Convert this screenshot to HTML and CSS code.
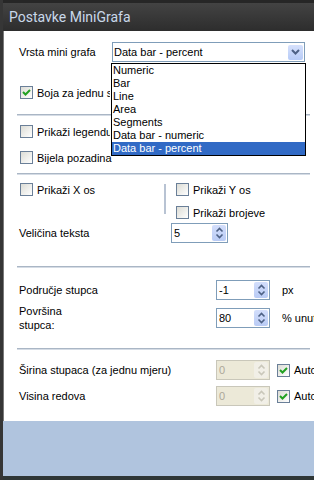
FILE: index.html
```html
<!DOCTYPE html>
<html lang="hr">
<head>
    <meta charset="UTF-8">
    <meta name="viewport" content="width=device-width, initial-scale=1.0">
    <title>Postavke MiniGrafa</title>
    <link rel="stylesheet" href="styles.css">
</head>
<body>
    <div class="window">
        <div class="title">Postavke MiniGrafa</div>
        <div class="content">
            <div class="row row-type">
                <span class="label w-type">Vrsta mini grafa</span>
                <div class="select">
                    <span class="select-value">Data bar - percent</span>
                    <span class="select-btn">
                        <svg width="9" height="6" viewBox="0 0 9 6"><path d="M1 1 L4.5 4.5 L8 1" fill="none" stroke="#4d6185" stroke-width="2"/></svg>
                    </span>
                    <ul class="dropdown">
                        <li>Numeric</li>
                        <li>Bar</li>
                        <li>Line</li>
                        <li>Area</li>
                        <li>Segments</li>
                        <li>Data bar - numeric</li>
                        <li class="selected">Data bar - percent</li>
                    </ul>
                </div>
            </div>

            <label class="check check-color"><span class="cb checked"></span><span class="hidden-by-list">Boja za jednu seriju</span></label>
            <div class="sep sep-1"></div>

            <label class="check check-legend"><span class="cb"></span><span class="hidden-by-list">Prikaži legendu</span></label>
            <label class="check check-white"><span class="cb"></span>Bijela pozadina</label>
            <div class="sep sep-2"></div>

            <div class="axes">
                <div class="axes-left">
                    <label class="check"><span class="cb"></span>Prikaži X os</label>
                </div>
                <div class="vsep"></div>
                <div class="axes-right">
                    <label class="check"><span class="cb"></span>Prikaži Y os</label>
                    <label class="check check-numbers"><span class="cb"></span>Prikaži brojeve</label>
                </div>
            </div>
            <div class="row row-size">
                <span class="label w-size">Veličina teksta</span>
                <div class="spin spin-wide">
                    <span class="spin-val">5</span>
                    <span class="spin-btn"><svg width="9" height="12" viewBox="0 0 9 12"><path d="M1.5 4.5 L4.5 1.5 L7.5 4.5 M1.5 7.5 L4.5 10.5 L7.5 7.5" fill="none" stroke="#4d6185" stroke-width="1.6"/></svg></span>
                </div>
            </div>
            <div class="sep sep-3"></div>

            <div class="row row-area">
                <span class="label w-wide">Područje stupca</span>
                <div class="spin">
                    <span class="spin-val">-1</span>
                    <span class="spin-btn"><svg width="9" height="12" viewBox="0 0 9 12"><path d="M1.5 4.5 L4.5 1.5 L7.5 4.5 M1.5 7.5 L4.5 10.5 L7.5 7.5" fill="none" stroke="#4d6185" stroke-width="1.6"/></svg></span>
                </div>
                <span class="unit">px</span>
            </div>
            <div class="row row-surface">
                <span class="label w-wide two-lines">Površina<br>stupca:</span>
                <div class="spin">
                    <span class="spin-val">80</span>
                    <span class="spin-btn"><svg width="9" height="12" viewBox="0 0 9 12"><path d="M1.5 4.5 L4.5 1.5 L7.5 4.5 M1.5 7.5 L4.5 10.5 L7.5 7.5" fill="none" stroke="#4d6185" stroke-width="1.6"/></svg></span>
                </div>
                <span class="unit">% unutar</span>
            </div>
            <div class="sep sep-4"></div>

            <div class="row row-width">
                <span class="label w-wide">Širina stupaca (za jednu mjeru)</span>
                <div class="spin disabled">
                    <span class="spin-val">0</span>
                    <span class="spin-btn"><svg width="9" height="12" viewBox="0 0 9 12"><path d="M1.5 4.5 L4.5 1.5 L7.5 4.5 M1.5 7.5 L4.5 10.5 L7.5 7.5" fill="none" stroke="#c9c7ba" stroke-width="1.6"/></svg></span>
                </div>
                <label class="check auto"><span class="cb checked"></span>Automatski</label>
            </div>
            <div class="row row-height">
                <span class="label w-wide">Visina redova</span>
                <div class="spin disabled">
                    <span class="spin-val">0</span>
                    <span class="spin-btn"><svg width="9" height="12" viewBox="0 0 9 12"><path d="M1.5 4.5 L4.5 1.5 L7.5 4.5 M1.5 7.5 L4.5 10.5 L7.5 7.5" fill="none" stroke="#c9c7ba" stroke-width="1.6"/></svg></span>
                </div>
                <label class="check auto"><span class="cb checked"></span>Automatski</label>
            </div>
        </div>
        <div class="footer"></div>
    </div>
</body>
</html>
```

FILE: styles.css
```css
body {
    margin: 0;
    font-family: 'Liberation Sans', Arial, sans-serif;
    font-size: 11px;
    color: #000;
    background-color: #2f3636;
}
.window {
    width: 314px;
    height: 480px;
    display: flex;
    flex-direction: column;
    overflow: hidden;
    border-left: 3px solid #363636;
    box-sizing: border-box;
}
.title {
    flex: none;
    height: 31px;
    box-sizing: border-box;
    border-top: 3px solid #262626;
    padding-left: 6px;
    line-height: 28px;
    font-family: Roboto, 'Liberation Sans', sans-serif;
    font-size: 14px;
    color: #c9d8ea;
    background: linear-gradient(#434343, #2d2d2d);
}
.content {
    flex: 1;
    background-color: #fff;
    box-shadow: inset 1px 0 0 #7a7a7a;
    padding: 11px 4px 0 16px;
    position: relative;
    white-space: nowrap;
}
.row {
    display: flex;
    align-items: center;
}
.label {
    flex: none;
}
.w-type { width: 93px; }
.w-size { width: 152px; }
.w-wide { width: 197px; }
.two-lines { line-height: 14px; }

/* combo box */
.select {
    position: relative;
    width: 193px;
    height: 20px;
    box-sizing: border-box;
    border: 1px solid #7f9db9;
    display: flex;
    align-items: center;
}
.select-value {
    flex: 1;
    padding-left: 1px;
}
.select-btn {
    width: 15px;
    height: 15px;
    margin-right: 1px;
    background: linear-gradient(#d6e1fc, #b7cbf7);
    border-radius: 2px;
    display: flex;
    align-items: center;
    justify-content: center;
}
.dropdown {
    position: absolute;
    top: 20px;
    left: -2px;
    width: 195px;
    box-sizing: border-box;
    margin: 0;
    padding: 0;
    list-style: none;
    border: 1px solid #000;
    background-color: #fff;
    z-index: 2;
}
.dropdown li {
    height: 13px;
    line-height: 13px;
    padding-left: 1px;
}
.dropdown li.selected {
    background-color: #316ac5;
    color: #fff;
}

/* checkboxes */
.check {
    display: flex;
    align-items: center;
    gap: 4px;
    height: 13px;
    margin-left: 1px;
}
.hidden-by-list {
    max-width: 73px;
    overflow: hidden;
}
.cb {
    flex: none;
    width: 13px;
    height: 13px;
    box-sizing: border-box;
    border: 1px solid #6a7f98;
    background: linear-gradient(135deg, #dcdcd5, #fff);
}
.cb.checked {
    background: url("data:image/svg+xml,%3Csvg xmlns='http://www.w3.org/2000/svg' width='11' height='11'%3E%3Cpath d='M2 5 L4.5 7.5 L9 3' fill='none' stroke='%2321a121' stroke-width='2'/%3E%3C/svg%3E") center no-repeat, linear-gradient(135deg, #dcdcd5, #fff);
}
.check-color { margin-top: 24px; }
.check-legend { margin-top: 9px; }
.check-white { margin-top: 13px; }

.sep {
    height: 1px;
    border-top: 1px solid #aab6c5;
    background-color: #d5dce5;
    margin-left: -2px;
}
.sep-1 { margin-top: 15px; }
.sep-2 { margin-top: 9px; }
.sep-3 { margin-top: 23px; }
.sep-4 { margin-top: 16px; }

/* axis options */
.axes {
    display: flex;
    margin-top: 8px;
}
.axes-left {
    width: 145px;
}
.vsep {
    width: 2px;
    height: 30px;
    margin-top: 1px;
    background-color: #b8c3d3;
}
.axes-right {
    padding-left: 9px;
}
.check-numbers { margin-top: 10px; }
.row-size { margin-top: 4px; }

/* spin boxes */
.spin {
    flex: none;
    width: 54px;
    height: 20px;
    box-sizing: border-box;
    border: 1px solid #7f9db9;
    background-color: #fff;
    display: flex;
    align-items: center;
}
.spin-wide { width: 57px; }
.spin-val {
    flex: 1;
    padding-left: 2px;
}
.spin-btn {
    width: 14px;
    height: 16px;
    margin-right: 1px;
    border-radius: 2px;
    background: linear-gradient(#d3defb, #b9cbf5);
    display: flex;
    align-items: center;
    justify-content: center;
}
.spin.disabled {
    border-color: #c9c7ba;
    background-color: #ece9d8;
    color: #aca899;
}
.spin.disabled .spin-btn {
    background: #f1efe7;
}
.unit { margin-left: 12px; }
.auto { margin-left: 7px; }

.row-area { margin-top: 12px; }
.row-surface { margin-top: 4px; }
.row-width { margin-top: 10px; }
.row-height { margin-top: 6px; }

.footer {
    flex: none;
    height: 55px;
    background-color: #b0c4de;
    border-bottom: 4px solid #2f3636;
}
```
